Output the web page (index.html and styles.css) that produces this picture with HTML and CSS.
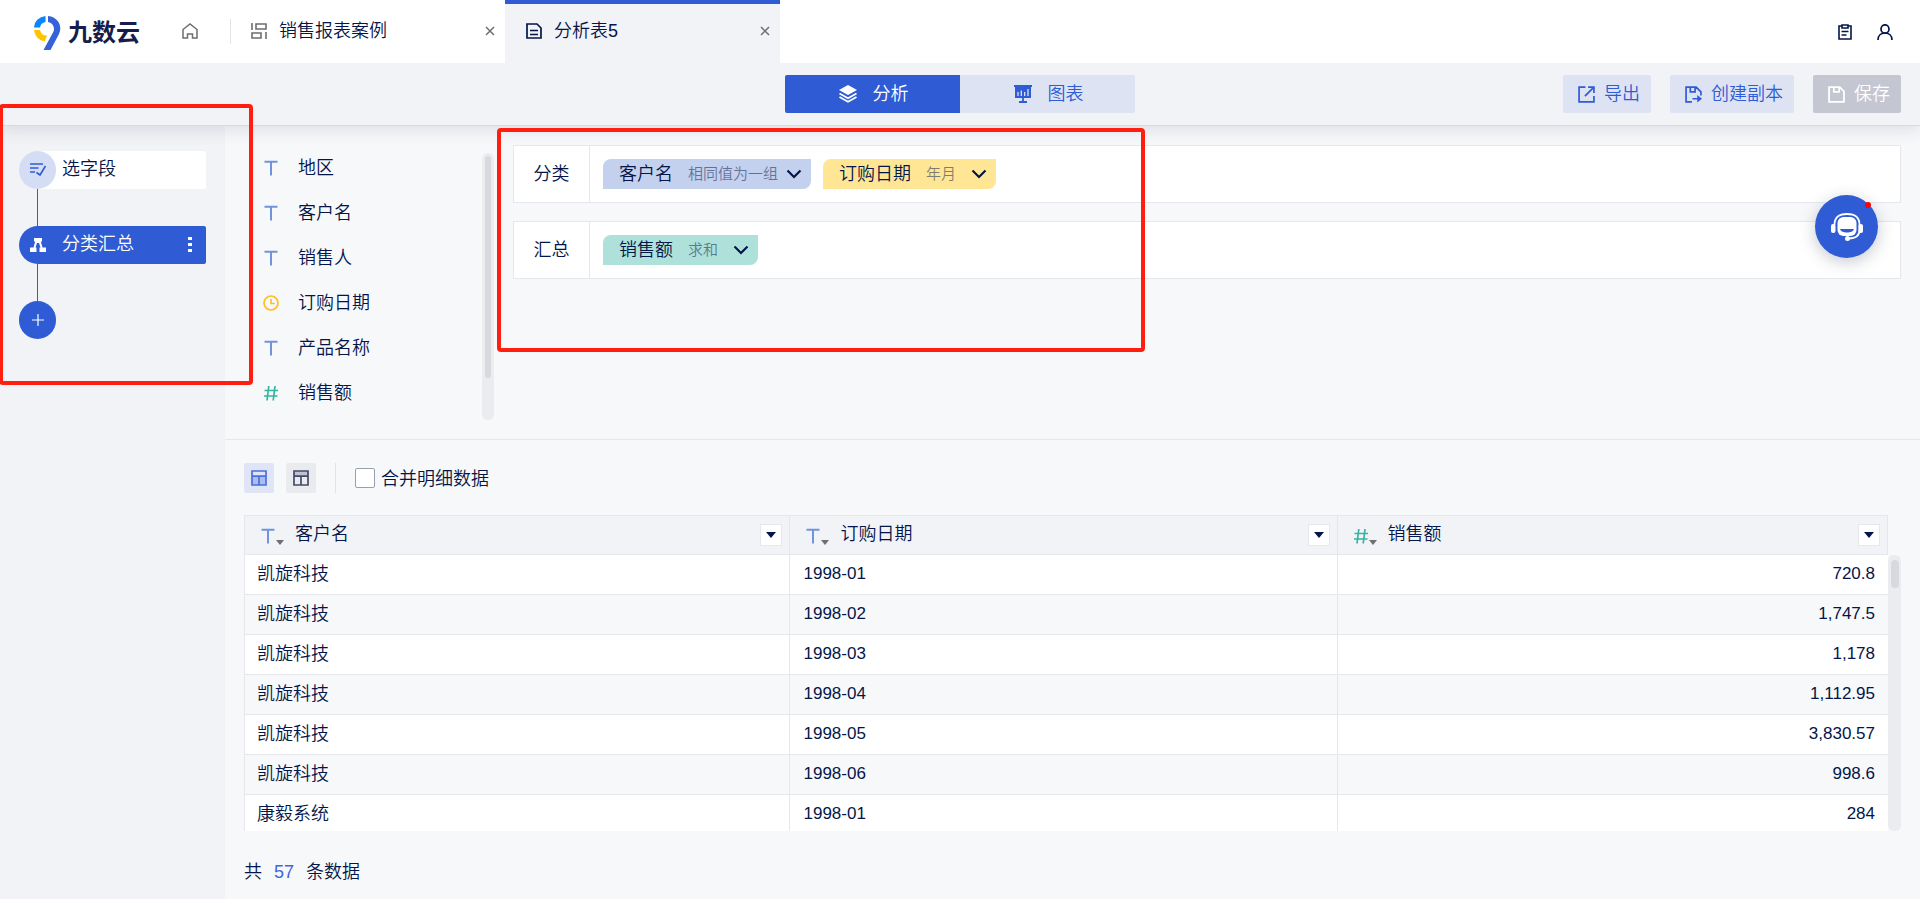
FILE: index.html
```html
<!DOCTYPE html>
<html lang="zh-CN">
<head>
<meta charset="utf-8">
<meta name="viewport" content="width=device-width, initial-scale=1">
<title>分析表5 - 九数云</title>
<link rel="stylesheet" href="styles.css">
</head>
<body>
<svg class="sprite" aria-hidden="true">
  <symbol id="i-text" viewBox="0 0 16 16"><path d="M1.500 1.800h13M8 2v13.500" stroke="currentColor" stroke-width="2" fill="none"/></symbol>
  <symbol id="i-num" viewBox="0 0 16 16"><path d="M5.800 1L4 15.500M12 1l-1.800 14.500M1.500 5.500h13.500M1 11h13.500" stroke="currentColor" stroke-width="1.700" fill="none"/></symbol>
  <symbol id="i-clock" viewBox="0 0 16 16"><circle cx="8" cy="8" r="7" stroke="currentColor" stroke-width="1.700" fill="none"/><path d="M8 4v4.500h3.800" stroke="currentColor" stroke-width="1.700" fill="none"/></symbol>
  <symbol id="i-close" viewBox="0 0 10 10"><path d="M1 1l8 8M9 1L1 9" stroke="currentColor" stroke-width="1.500" fill="none"/></symbol>
  <symbol id="i-chevron" viewBox="0 0 16 10"><path d="M1.500 1.500L8 8l6.500-6.500" stroke="currentColor" stroke-width="2.200" fill="none"/></symbol>
  <symbol id="i-down" viewBox="0 0 10 6"><path d="M0 0h10L5 6z" fill="currentColor"/></symbol>
  <symbol id="i-table" viewBox="0 0 16 16"><path d="M1 1h14v5H1z" fill="currentColor" fill-opacity=".25"/><path d="M1 1h14v14H1zM1 6.200h14M8 6v9" stroke="currentColor" stroke-width="1.700" fill="none"/></symbol>
  <symbol id="i-table-fill" viewBox="0 0 16 16"><path d="M1 6h14v9H1z" fill="currentColor" fill-opacity=".35"/><path d="M1 1h14v14H1zM1 6.200h14M8 6v9" stroke="currentColor" stroke-width="1.700" fill="none"/></symbol>
</svg>
<div class="app">
  <header class="topbar">
    <a class="logo" href="#" aria-label="九数云">
      <svg class="logo-mark" viewBox="0 0 27 34" aria-hidden="true">
        <path d="M0 11.500A13 11.500 0 0 1 11.500 0v6A7 6.500 0 0 0 6 11.500z" fill="#0a84ff"/>
        <path d="M0 14h6a7 7 0 0 0 7 5.500L10.800 25.500A12.500 12.500 0 0 1 0 14z" fill="#ffc400"/>
        <path d="M14 0a12.500 12.500 0 0 1 11 18L16.500 34H9.500L19 16.500a7 7 0 0 0-5-10.500z" fill="#3562d8"/>
      </svg>
      <span class="logo-name">九数云</span>
    </a>
    <a class="home" href="#" aria-label="首页"><svg class="icon" viewBox="0 0 16 16"><path d="M1 6.500L8 1l7 5.500V15h-4.500v-4h-5v4H1z" fill="none" stroke="currentColor" stroke-width="1.500"/></svg></a>
    <nav class="tabs">
      <div class="tab">
        <svg class="icon muted" viewBox="0 0 16 16"><path d="M1 0v7M5 1h10v5H5zM1 10h9v5H1zM15 9v7" fill="none" stroke="currentColor" stroke-width="1.600"/></svg>
        <a class="tab-title" href="#">销售报表案例</a>
        <button class="close" aria-label="关闭"><svg viewBox="0 0 10 10"><use href="#i-close"/></svg></button>
      </div>
      <div class="tab tab-active">
        <svg class="icon" viewBox="0 0 16 16"><path d="M1 1h10l4 4v10H1z" fill="none" stroke="currentColor" stroke-width="1.700"/><path d="M4 7.500h8M4 11.500h8" stroke="currentColor" stroke-width="1.500"/></svg>
        <a class="tab-title" href="#">分析表5</a>
        <button class="close" aria-label="关闭"><svg viewBox="0 0 10 10"><use href="#i-close"/></svg></button>
      </div>
    </nav>
    <div class="account">
      <button class="plain" aria-label="任务"><svg class="icon" viewBox="0 0 16 16"><path d="M4.500 2H2v13h12V2h-2.500M5 1h6v3H5z" fill="none" stroke="currentColor" stroke-width="1.600"/><path d="M4.500 7.500h7M4.500 11h5" stroke="currentColor" stroke-width="1.500"/></svg></button>
      <button class="plain" aria-label="用户"><svg class="icon" viewBox="0 0 16 16"><ellipse cx="8" cy="5" rx="4" ry="4.200" fill="none" stroke="currentColor" stroke-width="1.700"/><path d="M1 16c0-4.500 3-7 7-7s7 2.500 7 7" fill="none" stroke="currentColor" stroke-width="1.700"/></svg></button>
    </div>
  </header>

  <div class="toolbar">
    <div class="toolbar-side"></div>
    <div class="segmented">
      <button class="segment segment-on"><svg class="icon-lg" viewBox="0 0 18 18"><path d="M9 0l9 5-9 5-9-5z" fill="currentColor"/><path d="M.5 8.500L9 13.200l8.500-4.700M.5 12L9 16.700l8.500-4.700" fill="none" stroke="currentColor" stroke-width="1.800"/></svg>分析</button>
      <button class="segment"><svg class="icon-lg" viewBox="0 0 18 18"><path d="M0 0h18v2h-1v11H1V2H0z" fill="currentColor"/><path d="M4 11V7M7.300 11V5.500M10.700 11V7M14 11V4" stroke="#dee3f4" stroke-width="1.300"/><path d="M9 13v3M5 17h8" stroke="currentColor" stroke-width="1.800"/></svg>图表</button>
    </div>
    <div class="toolbar-side actions">
      <button class="action"><svg class="icon-md" viewBox="0 0 16 16"><path d="M7 1H1v14h14V9.500M9.500 1H15v5.500M15 1L6.500 9.500" fill="none" stroke="currentColor" stroke-width="1.600"/></svg>导出</button>
      <button class="action"><svg class="icon-md" viewBox="0 0 16 16"><path d="M6.500 15H1V1h9.500L15 5.500V9M5 1v4.500h4.500V1M7 12h6" fill="none" stroke="currentColor" stroke-width="1.600"/><path d="M11.500 8.500L16 12l-4.500 3.500z" fill="currentColor"/></svg>创建副本</button>
      <button class="action action-off" disabled><svg class="icon-md" viewBox="0 0 16 16"><path d="M1 1h10l4 4v10H1zM5.500 1v4.500h5V1" fill="none" stroke="currentColor" stroke-width="1.700"/></svg>保存</button>
    </div>
  </div>

  <div class="workspace">
    <aside class="steps">
      <button class="step"><span class="step-dot"><svg class="icon" viewBox="0 0 16 16"><path d="M0 2h13M0 6h8.500M0 10h5M6.500 10.500l3.500 2.500 5.500-9" fill="none" stroke="currentColor" stroke-width="1.700"/></svg></span><span class="step-name">选字段</span></button>
      <span class="link"></span>
      <button class="step step-on"><span class="step-dot"><svg class="icon" viewBox="0 0 16 16"><path d="M4 1h8v3.500h-1.200l1.700 6H16V15H9.500v-4.500h1L9 6H7l-1.500 4.500h1V15H0v-4.500h3.500l1.700-6H4z" fill="currentColor"/></svg></span><span class="step-name">分类汇总</span><svg class="more" viewBox="0 0 4 16"><path d="M0 0h4v3H0zM0 6h4v3H0zM0 12h4v3H0z" fill="currentColor"/></svg></button>
      <span class="link"></span>
      <button class="add" aria-label="添加步骤"><svg viewBox="0 0 12 12"><path d="M0 6h12M6 0v12" stroke="currentColor" stroke-width="1.200"/></svg></button>
    </aside>

    <main class="main">
      <section class="config">
        <ul class="fields">
          <li class="field"><svg class="icon c-text"><use href="#i-text"/></svg>地区</li>
          <li class="field"><svg class="icon c-text"><use href="#i-text"/></svg>客户名</li>
          <li class="field"><svg class="icon c-text"><use href="#i-text"/></svg>销售人</li>
          <li class="field"><svg class="icon c-date"><use href="#i-clock"/></svg>订购日期</li>
          <li class="field"><svg class="icon c-text"><use href="#i-text"/></svg>产品名称</li>
          <li class="field"><svg class="icon c-num"><use href="#i-num"/></svg>销售额</li>
        </ul>
        <div class="track fields-track"><span class="thumb fields-thumb"></span></div>
        <div class="shelves">
          <div class="shelf">
            <span class="shelf-name">分类</span>
            <div class="chips">
              <button class="chip chip-blue">客户名<span class="chip-mode">相同值为一组</span><svg class="chevron"><use href="#i-chevron"/></svg></button>
              <button class="chip chip-yellow">订购日期<span class="chip-mode">年月</span><svg class="chevron"><use href="#i-chevron"/></svg></button>
            </div>
          </div>
          <div class="shelf">
            <span class="shelf-name">汇总</span>
            <div class="chips">
              <button class="chip chip-green">销售额<span class="chip-mode">求和</span><svg class="chevron"><use href="#i-chevron"/></svg></button>
            </div>
          </div>
        </div>
      </section>

      <section class="result">
        <div class="view-bar">
          <button class="view view-on" aria-label="合并视图"><svg class="icon"><use href="#i-table-fill"/></svg></button>
          <button class="view" aria-label="表格视图"><svg class="icon"><use href="#i-table"/></svg></button>
          <span class="rule"></span>
          <input class="check" type="checkbox" id="merge"><label class="check-label" for="merge">合并明细数据</label>
        </div>
        <div class="grid">
          <div class="grid-view">
            <table class="data">
              <thead>
                <tr>
                  <th class="col-a"><div class="head"><svg class="icon c-text"><use href="#i-text"/></svg><svg class="caret"><use href="#i-down"/></svg><span class="head-name">客户名</span><button class="filter" aria-label="筛选客户名"><svg><use href="#i-down"/></svg></button></div></th>
                  <th class="col-b"><div class="head"><svg class="icon c-text"><use href="#i-text"/></svg><svg class="caret"><use href="#i-down"/></svg><span class="head-name">订购日期</span><button class="filter" aria-label="筛选订购日期"><svg><use href="#i-down"/></svg></button></div></th>
                  <th><div class="head"><svg class="icon c-num"><use href="#i-num"/></svg><svg class="caret"><use href="#i-down"/></svg><span class="head-name">销售额</span><button class="filter" aria-label="筛选销售额"><svg><use href="#i-down"/></svg></button></div></th>
                </tr>
              </thead>
              <tbody>
                <tr><td>凯旋科技</td><td>1998-01</td><td>720.8</td></tr>
                <tr><td>凯旋科技</td><td>1998-02</td><td>1,747.5</td></tr>
                <tr><td>凯旋科技</td><td>1998-03</td><td>1,178</td></tr>
                <tr><td>凯旋科技</td><td>1998-04</td><td>1,112.95</td></tr>
                <tr><td>凯旋科技</td><td>1998-05</td><td>3,830.57</td></tr>
                <tr><td>凯旋科技</td><td>1998-06</td><td>998.6</td></tr>
                <tr><td>康毅系统</td><td>1998-01</td><td>284</td></tr>
              </tbody>
            </table>
          </div>
          <div class="track grid-track"><span class="thumb grid-thumb"></span></div>
        </div>
        <footer class="count">共<span class="total">57</span>条数据</footer>
      </section>
    </main>
  </div>

  <button class="support" aria-label="在线客服">
    <svg viewBox="0 0 32 28"><path d="M3.500 12C3.500 4 8 1 16 1s12.500 3 12.500 11v5c0 6-4 8.500-11 8.500" fill="none" stroke="currentColor" stroke-width="1.800"/><rect x="0" y="11" width="4.500" height="9" rx="2" fill="currentColor"/><rect x="27.500" y="11" width="4.500" height="9" rx="2" fill="currentColor"/><rect x="6.500" y="4" width="19" height="19" rx="6" fill="currentColor"/><path d="M9 16h14c-1 4.800-13 4.800-14 0z" fill="#2f5bd5"/><circle cx="16.500" cy="25.500" r="2.500" fill="currentColor"/></svg>
    <span class="badge"></span>
  </button>
  <div class="mark mark-steps"></div>
  <div class="mark mark-shelves"></div>
</div>
</body>
</html>
```
FILE: styles.css
```css
* { box-sizing: border-box; }

body {
  margin: 0;
  color: #04154a;
  background: #f7f8fa;
  font: 350 18px/24px "Liberation Sans", "Noto Sans CJK SC", sans-serif;
}

button {
  margin: 0;
  padding: 0;
  border: 0;
  background: none;
  color: inherit;
  font: inherit;
  cursor: pointer;
}

a { color: inherit; text-decoration: none; }
svg { display: block; flex: none; }

.sprite { position: absolute; width: 0; height: 0; }
.icon { width: 16px; height: 16px; }
.icon-md { width: 17px; height: 17px; }
.icon-lg { width: 18px; height: 18px; }
.muted { color: #6e6e73; }
.c-text { color: #6f93dc; }
.c-date { color: #ffbf1f; }
.c-num { color: #37b3a2; }

.app {
  position: relative;
  display: flex;
  flex-direction: column;
  height: 100vh;
  overflow: hidden;
}

/* top bar */
.topbar {
  position: relative;
  z-index: 1;
  display: flex;
  align-items: center;
  height: 63px;
  flex: none;
  background: #fff;
}
.logo { display: flex; align-items: center; gap: 7px; padding: 2px 0 0 34px; }
.logo-mark { width: 27px; height: 34px; }
.logo-name { font-size: 24px; font-weight: 700; line-height: 32px; color: #161c4c; }
.home { margin-left: 42px; padding-bottom: 1px; color: #6e6e73; }
.tabs { display: flex; align-self: stretch; margin-left: 32px; }
.tab {
  position: relative;
  display: flex;
  align-items: center;
  width: 275px;
  padding: 0 10px 2px 21px;
  gap: 12px;
}
.tab:first-child::before {
  content: "";
  position: absolute;
  left: 0;
  top: 19px;
  width: 1px;
  height: 25px;
  background: #e2e3e8;
}
.tab-active {
  background: #f2f3f7;
  box-shadow: inset 0 4px #2f5bd5;
}
.tab-title { flex: 1; }
.close { color: #6e6e73; }
.close svg { width: 10px; height: 10px; }
.account { display: flex; gap: 24px; margin-left: auto; padding-right: 27px; }

/* toolbar */
.toolbar {
  position: relative;
  display: flex;
  align-items: center;
  height: 63px;
  flex: none;
  padding: 0 19px;
  background: #f2f3f7;
  border-bottom: 1px solid #d8dae1;
  box-shadow: 0 4px 16px rgba(30, 40, 70, .12);
}
.toolbar-side { flex: 1; }
.segmented { display: flex; border-radius: 2px; overflow: hidden; }
.segment {
  display: flex;
  align-items: center;
  justify-content: center;
  gap: 16px;
  width: 175px;
  height: 38px;
  padding-left: 2px;
  color: #2f5bd5;
  background: #dee3f4;
}
.segment-on { color: #fff; background: #2f5bd5; }
.actions { display: flex; justify-content: flex-end; gap: 19px; }
.action {
  display: flex;
  align-items: center;
  gap: 9px;
  height: 38px;
  padding: 0 11px 0 15px;
  border-radius: 2px;
  color: #2f5bd5;
  background: #dee3f4;
}
.action-off { color: #fff; background: #c4c6d2; }

.workspace { display: flex; flex: 1; min-height: 0; }

/* steps */
.steps {
  display: flex;
  flex-direction: column;
  align-items: flex-start;
  width: 225px;
  flex: none;
  padding: 25px 19px;
  background: #f2f3f7;
}
.step {
  display: flex;
  align-items: center;
  gap: 6px;
  width: 100%;
  height: 38px;
  padding-right: 14px;
  border-radius: 19px 2px 2px 19px;
  background: #fff;
}
.step-on { color: #fff; background: #2f5bd5; }
.step-dot {
  display: flex;
  align-items: center;
  justify-content: center;
  width: 37px;
  height: 38px;
  border-radius: 19px;
  color: #2f5bd5;
  background: #d5ddf4;
}
.step-on .step-dot { color: #fff; background: none; }
.step-name { flex: 1; padding-bottom: 2px; text-align: left; }
.more { width: 4px; height: 16px; }
.link { width: 1px; height: 37px; margin-left: 18px; background: #2f5bd5; }
.add {
  display: flex;
  align-items: center;
  justify-content: center;
  width: 37px;
  height: 38px;
  border-radius: 19px;
  color: #fff;
  background: #2f5bd5;
}
.add svg { width: 12px; height: 12px; }

.main { display: flex; flex: 1; flex-direction: column; min-width: 0; }

/* fields and shelves */
.config {
  display: flex;
  height: 314px;
  flex: none;
  padding: 19px 19px 0;
  border-bottom: 1px solid #e6e7eb;
}
.fields { width: 238px; margin: 0; padding: 0; list-style: none; }
.field { display: flex; align-items: center; gap: 19px; height: 45px; padding-left: 19px; }
.track { background: #ebecf0; border-radius: 6px; }
.thumb { display: block; background: #d8d9df; border-radius: 4px; }
.fields-track { width: 12px; height: 267px; margin-top: 8px; padding: 3px; }
.fields-thumb { height: 222px; }
.shelves { display: flex; flex: 1; flex-direction: column; gap: 18px; margin-left: 19px; }
.shelf { display: flex; height: 58px; background: #fff; border: 1px solid #e6e7eb; }
.shelf-name {
  display: flex;
  align-items: center;
  justify-content: center;
  width: 76px;
  border-right: 1px solid #e6e7eb;
}
.chips { display: flex; align-items: center; gap: 12px; padding-left: 13px; }
.chip {
  display: flex;
  align-items: center;
  gap: 15px;
  height: 30px;
  padding: 0 9px 0 16px;
  border-radius: 8px 0;
}
.chip-mode { font-size: 15px; opacity: .5; }
.chip-blue { background: #c3d0ee; }
.chip-blue .chevron { margin-left: -7px; }
.chip-yellow { background: #ffe694; }
.chip-green { background: #aee1da; }
.chevron { width: 16px; height: 10px; }

/* result */
.result { display: flex; flex: 1; flex-direction: column; min-height: 0; padding: 23px 19px 0; }
.view-bar { display: flex; align-items: center; height: 30px; flex: none; }
.view {
  display: flex;
  align-items: center;
  justify-content: center;
  width: 30px;
  height: 30px;
  margin-right: 12px;
  border-radius: 2px;
  color: #454a6b;
  background: #eaebef;
}
.view-on { color: #4a70dc; background: #dfe5f6; }
.rule { width: 1px; height: 30px; margin: 0 19px 0 7px; background: #e2e3e8; }
.check {
  appearance: none;
  width: 20px;
  height: 20px;
  margin: 0 6px 0 0;
  border: 1px solid #9a9fb0;
  border-radius: 2px;
  background: #fff;
}
.check-label { padding-top: 2px; }
.grid { display: flex; flex: 1; min-height: 0; margin-top: 22px; }
.grid-view { flex: 1; overflow: hidden; }
.grid-track { width: 13px; margin-top: 40px; padding: 5px 2px 0 3px; }
.grid-thumb { height: 28px; }
.data { width: 100%; table-layout: fixed; border-spacing: 0; border-left: 1px solid #e6e7eb; }
.col-a { width: 33.2%; }
.col-b { width: 33.3%; }
.data th, .data td {
  height: 40px;
  padding: 0 13px 2px;
  border-right: 1px solid #e6e7eb;
  border-bottom: 1px solid #e6e7eb;
  text-align: left;
  font-weight: 350;
}
.data th { padding: 0 7px 0 15px; border-top: 1px solid #e6e7eb; background: #f2f3f7; }
.data td:first-child { padding-left: 12px; }
.data td:last-child { border-right: 0; text-align: right; }
.data td:not(:first-child) { font-size: 17px; }
.data tbody tr { background: #fff; }
.data tbody tr:nth-child(even) { background: #f7f8fa; }
.head { display: flex; align-items: center; }
.head .icon { margin-top: 2px; }
.caret { width: 8px; height: 5px; margin-top: 14px; color: #6e6e73; }
.head-name { flex: 1; padding: 0 0 2px 11px; }
.filter {
  display: flex;
  align-items: center;
  justify-content: center;
  width: 22px;
  height: 22px;
  border: 1px solid #e6e7eb;
  background: #fff;
}
.filter svg { width: 10px; height: 6px; }
.count { display: flex; align-items: center; gap: 12px; height: 68px; flex: none; padding-top: 14px; }
.total { color: #3f66dc; }

/* floating support button */
.support {
  position: absolute;
  right: 42px;
  top: 195px;
  display: flex;
  align-items: center;
  justify-content: center;
  width: 63px;
  height: 63px;
  border-radius: 50%;
  color: #fff;
  background: #2f5bd5;
  box-shadow: 0 4px 16px rgba(30, 40, 70, .25);
}
.support svg { width: 32px; height: 28px; }
.badge {
  position: absolute;
  top: 7px;
  right: 7px;
  width: 6px;
  height: 6px;
  border-radius: 50%;
  background: #f00;
}

/* highlight frames over the page */
.mark { position: absolute; border: 4px solid #ff1e0f; border-radius: 4px; pointer-events: none; }
.mark-steps { left: -1px; top: 104px; width: 254px; height: 281px; }
.mark-shelves { left: 497px; top: 128px; width: 648px; height: 224px; }
```
